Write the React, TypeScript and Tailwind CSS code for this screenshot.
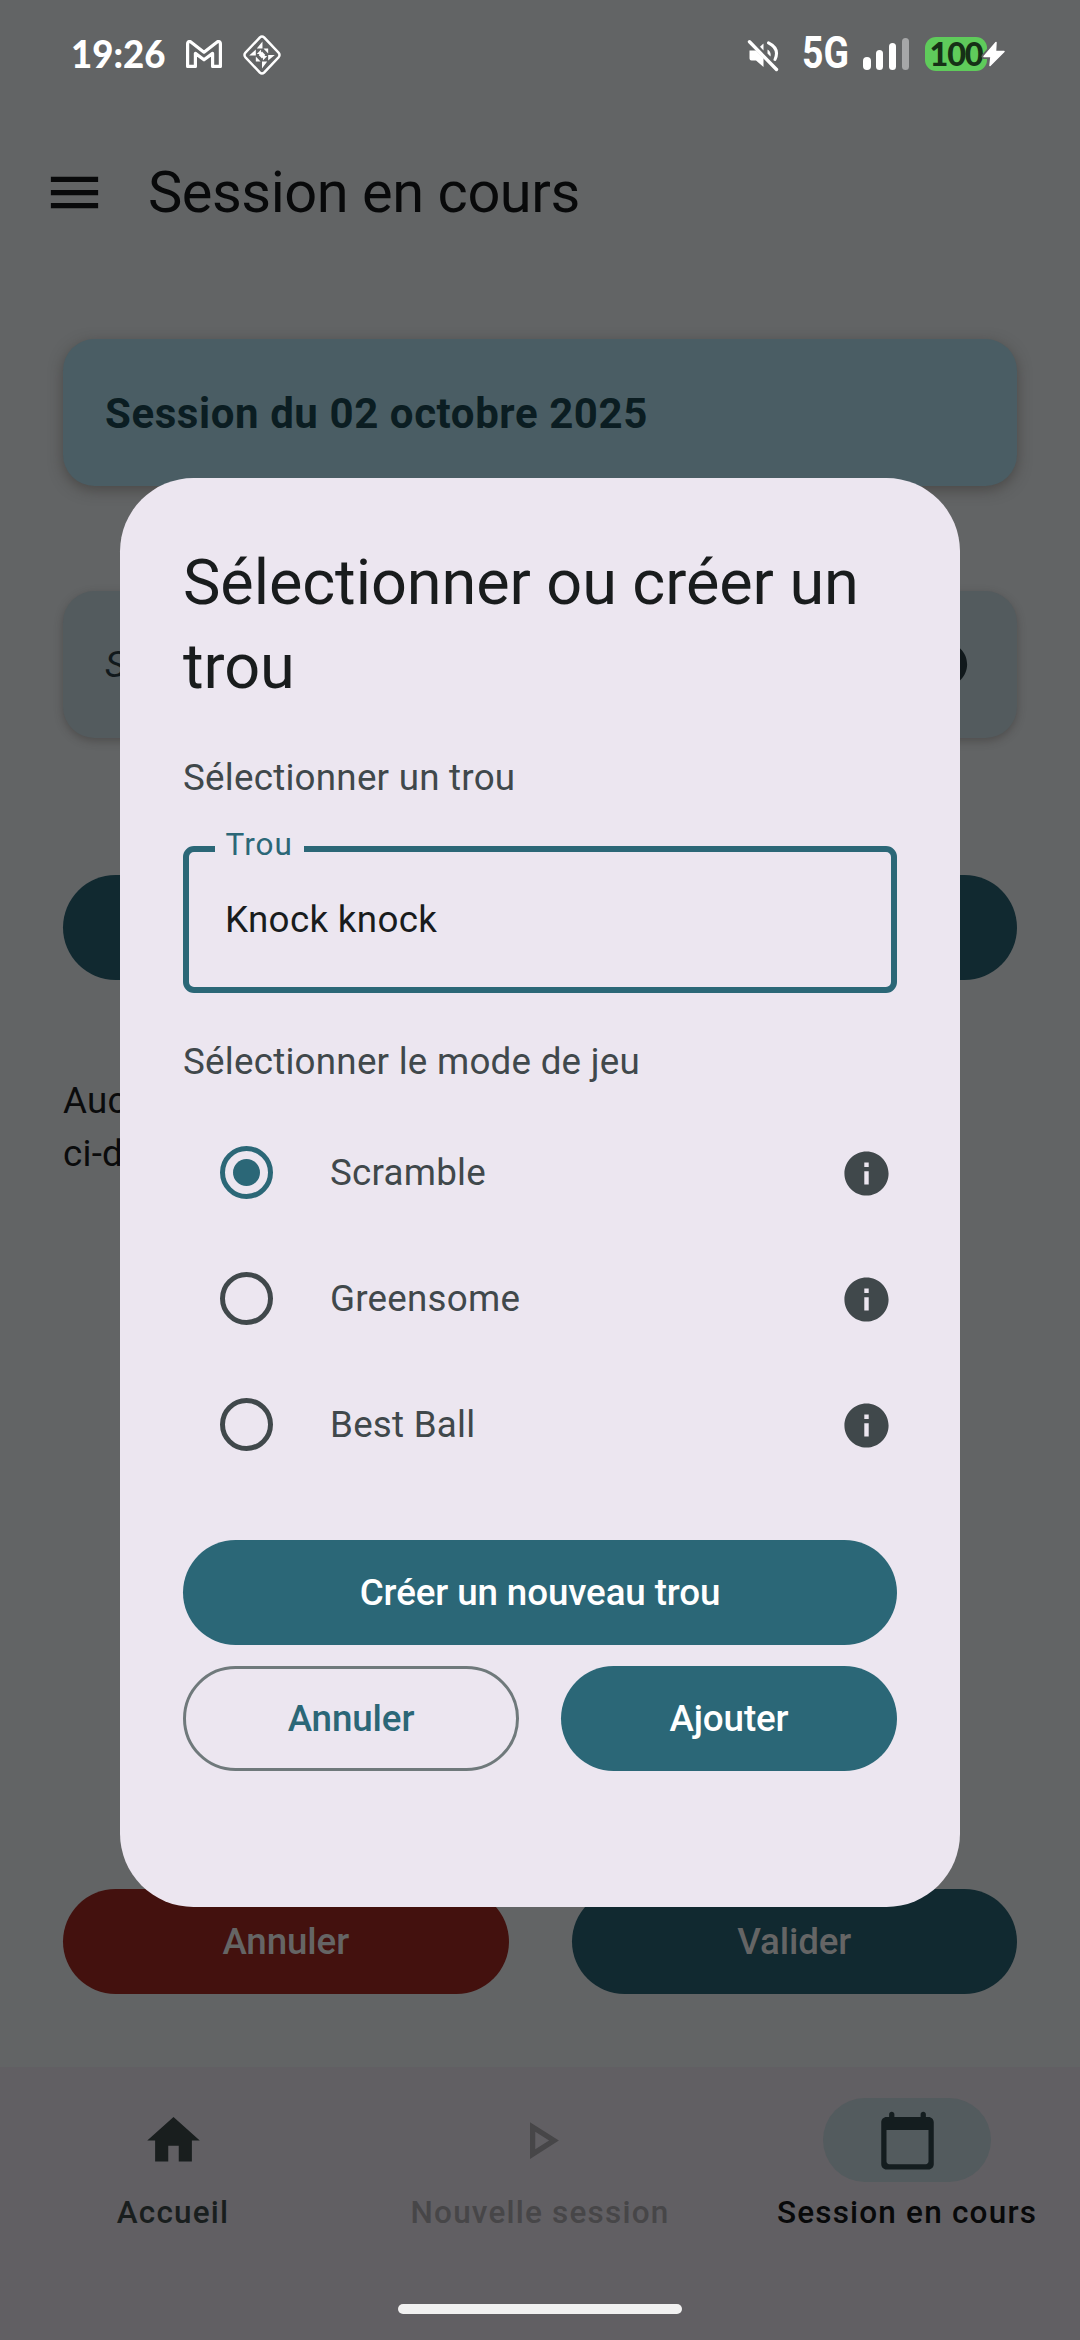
import type { ReactNode } from "react";

function StatusBar() {
  return (
    <div className="flex h-[108px] items-center text-white">
      <div className="ml-[71px] w-[93px] shrink-0 pt-[2px]">
        <span className="inline-block origin-left scale-x-[0.95] whitespace-nowrap font-['Lato'] text-[38.500px] leading-none font-black">19:26</span>
      </div>
      <svg className="ml-[22px] h-[28px] w-[36px]" viewBox="0 0 36 28" fill="none" stroke="white" strokeWidth="3.200" strokeLinejoin="round">
        <path d="M1.600 26.400V3.800Q1.600 1.200 4.200 1.600L18 12.200 31.800 1.600Q34.400 1.200 34.400 3.800V26.400H26.600V13.400L18 19.800 9.400 13.400V26.400Z" />
      </svg>
      <svg className="mt-[2px] ml-[21px] h-[40px] w-[38px]" viewBox="0 0 40 40" preserveAspectRatio="none">
        <path d="M17.700 2.500Q20 .4 22.300 2.500L37.400 17.700Q39.500 20 37.400 22.300L22.300 37.500Q20 39.600 17.700 37.500L2.600 22.300Q.5 20 2.600 17.700Z" fill="none" stroke="white" strokeWidth="2.500" />
        <path d="M20.500 6.500V13.500H14.500ZM33.500 20H26.500V25.500ZM20 33.500V26.500H25.500ZM6.500 20.500H13.500V14.500ZM21.500 13.500H26.500V18.500ZM13.500 21.500V26.500H18.500ZM14.500 19L19 14.500V19ZM25.500 21L21 25.500V21ZM20 16.500L23.500 20 20 23.500 16.500 20Z" fill="white" />
      </svg>
      <div className="ml-auto flex items-center">
        <svg className="mt-[4px] h-[34px] w-[34px]" viewBox="0 0 34 34">
          <path d="M3.500 11.500H10L17.500 19V28L10 21.500H5.500Q3.500 21.500 3.500 19.500Z" fill="white" />
          <path d="M14 7.800L17.500 4.500V11.500ZM21.500 10.500Q25.500 13 24.500 17.500L21.500 14.500Z" fill="white" />
          <path d="M22.500 3.800Q34 9.500 29 20.500" fill="none" stroke="white" strokeWidth="3" strokeLinecap="round" />
          <path d="M3.500 2.800L30.500 30.500" stroke="white" strokeWidth="3.400" strokeLinecap="round" />
        </svg>
        <div className="ml-[22px] w-[47px] pt-[3px]">
          <span className="inline-block origin-left scale-x-[0.85] font-['Roboto'] text-[44px] leading-none font-bold">5G</span>
        </div>
        <div className="ml-[14px] flex h-[32px] items-end gap-[5.500px]">
          <i className="h-[13px] w-[7.300px] rounded-full bg-white" />
          <i className="h-[20px] w-[7.300px] rounded-full bg-white" />
          <i className="h-[27px] w-[7.300px] rounded-full bg-white" />
          <i className="h-[32px] w-[7.300px] rounded-full bg-[#a6a7a8]" />
        </div>
        <div className="relative mr-[93px] ml-[16px] flex h-[34px] w-[62px] items-center justify-center rounded-[11px] bg-[#5fcb5b]">
          <span className="font-['Lato'] text-[32.500px] leading-none font-black tracking-[-1.200px] text-[#163016]">100</span>
          <svg className="absolute top-[2px] left-[55px] h-[30px] w-[28px]" viewBox="0 0 28 30">
            <path d="M16 3.500L4 17.500H11L10 26.500 24 12.500H15.500Z" fill="white" stroke="#626365" strokeWidth="5" strokeLinejoin="round" />
            <path d="M16 3.500L4 17.500H11L10 26.500 24 12.500H15.500Z" fill="white" stroke="white" strokeWidth="1.500" strokeLinejoin="round" />
          </svg>
        </div>
      </div>
    </div>
  );
}

function InfoIcon({ className }: { className: string }) {
  return (
    <svg viewBox="0 0 24 24" className={className} fill="currentColor">
      <path d="M12 2C6.480 2 2 6.480 2 12s4.480 10 10 10 10-4.480 10-10S17.520 2 12 2zm1 15h-2v-6h2v6zm0-8h-2V7h2v2z" />
    </svg>
  );
}

function ModeOption({ label, selected = false }: { label: string; selected?: boolean }) {
  return (
    <div className="flex h-[126px] items-center">
      <span
        className={
          selected
            ? "mt-[1px] ml-[37px] flex size-[53px] items-center justify-center rounded-full border-[5.250px] border-[#2b6777]"
            : "mt-[1px] ml-[37px] size-[53px] rounded-full border-[5.250px] border-[#40484b]"
        }
      >
        {selected && <span className="size-[27px] rounded-full bg-[#2b6777]" />}
      </span>
      <span className="ml-[57px] flex-1 pt-[1px]">{label}</span>
      <InfoIcon className="mt-[3px] mr-[4px] size-[53px]" />
    </div>
  );
}

function NavItem({ label, className, pill, children }: { label: string; className: string; pill?: string; children: ReactNode }) {
  return (
    <div className={`flex flex-1 flex-col items-center ${className}`}>
      <div className={`flex h-[84px] w-[168px] items-center justify-center rounded-full ${pill ?? ""}`}>
        <svg viewBox="0 0 24 24" className="size-[63px]" fill="currentColor">
          {children}
        </svg>
      </div>
      <span className="mt-[10px] text-[31.500px] leading-[42px] font-medium tracking-[1.200px] whitespace-nowrap">{label}</span>
    </div>
  );
}

const pillButton = "flex h-[105px] items-center justify-center rounded-full font-medium tracking-[-0.120px]";

function Dialog() {
  return (
    <div className="absolute top-[478px] left-[120px] flex h-[1429px] w-[840px] flex-col rounded-[73.500px] bg-[#ece6f0] px-[63px] pt-[63px] text-[36.750px] leading-[53px] tracking-[0.240px] text-[#40484b]">
      <h2 className="text-[63px] leading-[84px] tracking-[-0.080px] text-[#191c1d]">Sélectionner ou créer un trou</h2>
      <p className="mt-[42px]">Sélectionner un trou</p>
      <div className="relative mt-[42px] flex h-[147px] items-center rounded-[11px] border-6 border-[#2b6777] px-[36px] text-[#191c1d]">
        <span className="absolute -top-[31px] left-[26px] bg-[#ece6f0] px-[10.500px] text-[31.500px] leading-[48px] tracking-[1.050px] text-[#2b6777]">Trou</span>
        <span className="tracking-[0.330px]">Knock knock</span>
      </div>
      <p className="mt-[42px]">Sélectionner le mode de jeu</p>
      <div className="mt-[21px]">
        <ModeOption label="Scramble" selected />
        <ModeOption label="Greensome" />
        <ModeOption label="Best Ball" />
      </div>
      <div className="mt-[53px] grid grid-cols-2 gap-x-[42px] gap-y-[21px]">
        <div className={`${pillButton} col-span-2 bg-[#2b6777] text-white`}>Créer un nouveau trou</div>
        <div className={`${pillButton} border-3 border-[#6f797b] text-[#2b6777]`}>Annuler</div>
        <div className={`${pillButton} bg-[#2b6777] text-white`}>Ajouter</div>
      </div>
    </div>
  );
}

export default function App() {
  return (
    <div className="relative flex h-[2340px] w-[1080px] flex-col overflow-hidden bg-[#626465] font-['Roboto',sans-serif] text-[36.750px] leading-[53px]">
      <StatusBar />
      <header className="flex h-[168px] items-center pl-[43px] text-[#08090a]">
        <svg viewBox="0 0 24 24" className="size-[63px]" fill="currentColor">
          <path d="M3 18h18v-2H3v2zm0-5h18v-2H3v2zm0-7v2h18V6H3z" />
        </svg>
        <h1 className="ml-[42px] text-[57.750px] leading-[73px] tracking-[-0.450px]">Session en cours</h1>
      </header>
      <main className="flex flex-1 flex-col px-[63px] pt-[63px]">
        <div className="flex h-[147px] items-center rounded-[31.500px] bg-[#4a5d64] px-[42px] pt-[2px] text-[42px] font-bold tracking-[0.580px] text-[#0b1d22] shadow-[0_4px_14px_rgba(50,46,42,0.5)]">
          Session du 02 octobre 2025
        </div>
        <div className="mt-[105px] flex h-[147px] items-center justify-between rounded-[31.500px] bg-[#535b5e] pr-[46px] pl-[42px] text-[#11191c] shadow-[0_3px_8px_rgba(50,46,42,0.4)]">
          <span className="italic">S</span>
          <InfoIcon className="size-[52.500px]" />
        </div>
        <div className="mt-[137px] h-[105px] rounded-full bg-[#112930]" />
        <p className="mt-[94px] tracking-[0.240px] text-[#0a0b0c]">
          Auc
          <br />
          ci-d
        </p>
        <div className="mt-auto mb-[73px] flex gap-[63px] text-[#656565]">
          <div className={`${pillButton} flex-1 bg-[#43110e]`}>Annuler</div>
          <div className={`${pillButton} flex-1 bg-[#112930]`}>Valider</div>
        </div>
      </main>
      <nav className="flex h-[273px] gap-[21px] bg-[#615f63] pt-[31px]">
        <NavItem label="Accueil" className="text-[#191e1e]">
          <path d="M10 20v-6h4v6h5v-8h3L12 3 2 12h3v8z" />
        </NavItem>
        <NavItem label="Nouvelle session" className="text-[#474648]">
          <path d="M10 8.640 15.270 12 10 15.360V8.640M8 5v14l11-7L8 5z" />
        </NavItem>
        <NavItem label="Session en cours" className="text-[#08090a]" pill="bg-[#535b5e] text-[#141d1f]">
          <path d="M20 3h-1V2c0-.55-.45-1-1-1s-1 .45-1 1v1H7V2c0-.55-.45-1-1-1s-1 .45-1 1v1H4c-1.100 0-2 .9-2 2v16c0 1.100.9 2 2 2h16c1.100 0 2-.9 2-2V5c0-1.100-.9-2-2-2zm-1 18H5c-.55 0-1-.45-1-1V8h16v12c0 .55-.45 1-1 1z" />
        </NavItem>
      </nav>
      <Dialog />
      <div className="absolute bottom-[26px] left-[398px] h-[10px] w-[284px] rounded-full bg-[#f1f1f1]" />
    </div>
  );
}
